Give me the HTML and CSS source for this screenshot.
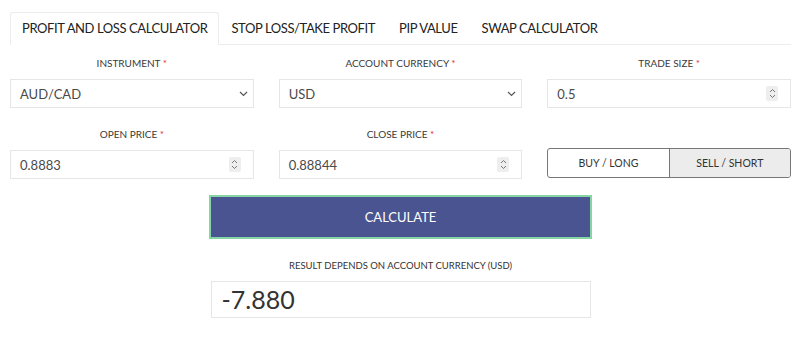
FILE: index.html
```html
<!DOCTYPE html>
<html lang="en">
<head>
    <meta charset="UTF-8">
    <meta name="viewport" content="width=device-width, initial-scale=1.0">
    <title>Forex Calculators</title>
    <link rel="stylesheet" href="styles.css">
</head>
<body>
    <div class="calc">
        <ul class="tabs">
            <li class="tab active">PROFIT AND LOSS CALCULATOR</li>
            <li class="tab">STOP LOSS/TAKE PROFIT</li>
            <li class="tab">PIP VALUE</li>
            <li class="tab">SWAP CALCULATOR</li>
        </ul>

        <div class="form-grid">
            <div class="field">
                <label>INSTRUMENT <span class="req">*</span></label>
                <div class="box select">
                    <span>AUD/CAD</span>
                    <svg class="chevron" width="9" height="6" viewBox="0 0 9 6"><path d="M1 1l3.5 3.5L8 1" fill="none" stroke="#555" stroke-width="1.2"/></svg>
                </div>
            </div>
            <div class="field">
                <label>ACCOUNT CURRENCY <span class="req">*</span></label>
                <div class="box select">
                    <span>USD</span>
                    <svg class="chevron" width="9" height="6" viewBox="0 0 9 6"><path d="M1 1l3.5 3.5L8 1" fill="none" stroke="#555" stroke-width="1.2"/></svg>
                </div>
            </div>
            <div class="field">
                <label>TRADE SIZE <span class="req">*</span></label>
                <div class="box">
                    <span>0.5</span>
                    <span class="spinner"><svg width="7" height="11" viewBox="0 0 7 11"><path d="M1 4l2.5-2.5L6 4M1 7l2.5 2.5L6 7" fill="none" stroke="#777" stroke-width="1"/></svg></span>
                </div>
            </div>
            <div class="field">
                <label>OPEN PRICE <span class="req">*</span></label>
                <div class="box">
                    <span>0.8883</span>
                    <span class="spinner"><svg width="7" height="11" viewBox="0 0 7 11"><path d="M1 4l2.5-2.5L6 4M1 7l2.5 2.5L6 7" fill="none" stroke="#777" stroke-width="1"/></svg></span>
                </div>
            </div>
            <div class="field">
                <label>CLOSE PRICE <span class="req">*</span></label>
                <div class="box">
                    <span>0.88844</span>
                    <span class="spinner"><svg width="7" height="11" viewBox="0 0 7 11"><path d="M1 4l2.5-2.5L6 4M1 7l2.5 2.5L6 7" fill="none" stroke="#777" stroke-width="1"/></svg></span>
                </div>
            </div>
            <div class="field">
                <label>&nbsp;</label>
                <div class="toggle">
                    <span class="opt">BUY / LONG</span>
                    <span class="opt selected">SELL / SHORT</span>
                </div>
            </div>
        </div>

        <button class="calc-btn">CALCULATE</button>

        <div class="result">
            <p class="result-label">RESULT DEPENDS ON ACCOUNT CURRENCY (USD)</p>
            <div class="result-box">-7.880</div>
        </div>
    </div>
</body>
</html>
```

FILE: styles.css
```css
body {
    margin: 0;
    background: #fff;
    color: #333;
    font-family: "Lato", "Liberation Sans", sans-serif;
}

.calc {
    padding: 12px 9px 0 10px;
}

.tabs {
    list-style: none;
    margin: 0;
    padding: 0;
    display: flex;
    border-bottom: 1px solid #ececec;
    height: 32px;
}

.tab {
    padding: 0 11px;
    font-size: 13px;
    letter-spacing: -0.4px;
    line-height: 30px;
    color: #222;
    margin-bottom: -1px;
    border: 1px solid transparent;
    border-bottom: none;
}

.tab.active {
    background: #fff;
    border-color: #ececec;
    border-radius: 3px 3px 0 0;
    height: 32px;
    padding: 0 11px;
}

.form-grid {
    display: grid;
    grid-template-columns: repeat(3, 1fr);
    column-gap: 25px;
    row-gap: 19px;
    margin-top: 11px;
}

.field label {
    display: block;
    text-align: center;
    font-size: 10px;
    line-height: 14px;
    color: #3a3a3a;
    margin-bottom: 9px;
}

.req {
    color: #e03030;
}

.box {
    height: 29px;
    border: 1px solid #e6e6e6;
    box-sizing: border-box;
    display: flex;
    align-items: center;
    justify-content: space-between;
    padding: 0 12px 0 9px;
    font-size: 13px;
    color: #4a4a4a;
}

.box.select {
    padding-right: 5px;
}

.spinner {
    display: flex;
    align-items: center;
    justify-content: center;
    width: 12px;
    height: 15px;
    background: #eee;
    border-radius: 2px;
}

.toggle {
    display: flex;
    height: 30px;
    border: 1px solid #777;
    border-radius: 3px;
    overflow: hidden;
    box-sizing: border-box;
    margin-top: -2px;
}

.opt {
    flex: 1;
    display: flex;
    align-items: center;
    justify-content: center;
    font-size: 10.5px;
    color: #333;
}

.opt.selected {
    background: #ececec;
    border-left: 1px solid #777;
}

.calc-btn {
    display: block;
    width: 383px;
    height: 44px;
    margin: 16px auto 0;
    background: #4a5490;
    border: 2px solid #86d6a5;
    color: #fff;
    font-family: inherit;
    font-size: 13px;
}

.result {
    width: 380px;
    margin: 0 auto;
}

.result-label {
    margin: 20px 0 8px;
    text-align: center;
    font-size: 9.5px;
    line-height: 14px;
}

.result-box {
    height: 37px;
    border: 1px solid #e6e6e6;
    box-sizing: border-box;
    padding: 0 10px;
    font-size: 25px;
    line-height: 35px;
    color: #333;
}
```
